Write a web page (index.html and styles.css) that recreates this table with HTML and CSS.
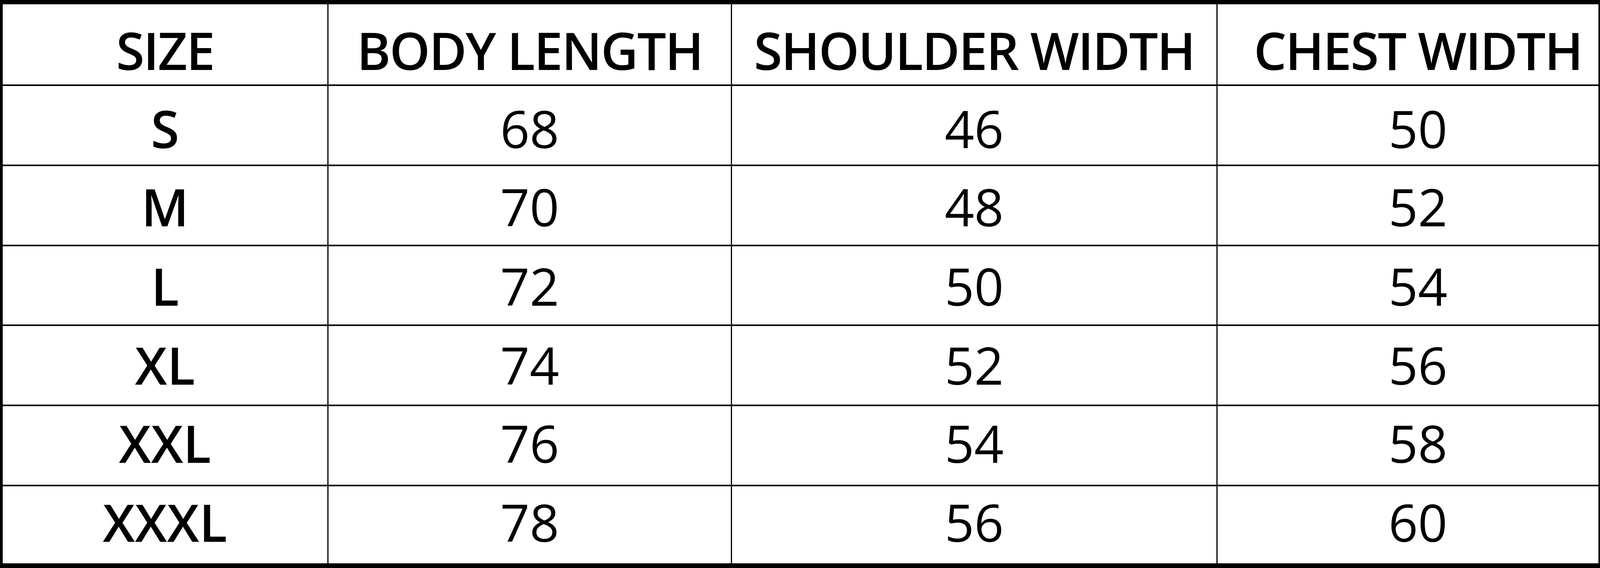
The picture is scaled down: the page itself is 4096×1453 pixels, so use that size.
FILE: index.html
```html
<!DOCTYPE html>
<html lang="en">
<head>
<meta charset="utf-8">
<title>Size Chart</title>
<link rel="stylesheet" href="styles.css">
</head>
<body>
<div class="chart">
  <div class="cell head r0">SIZE</div>
  <div class="cell head r0">BODY LENGTH</div>
  <div class="cell head r0">SHOULDER WIDTH</div>
  <div class="cell head r0 last">CHEST WIDTH</div>

  <div class="cell size r1">S</div>
  <div class="cell num r1">68</div>
  <div class="cell num r1">46</div>
  <div class="cell num r1 last">50</div>

  <div class="cell size r2">M</div>
  <div class="cell num r2">70</div>
  <div class="cell num r2">48</div>
  <div class="cell num r2 last">52</div>

  <div class="cell size r3">L</div>
  <div class="cell num r3">72</div>
  <div class="cell num r3">50</div>
  <div class="cell num r3 last">54</div>

  <div class="cell size r4">XL</div>
  <div class="cell num r4">74</div>
  <div class="cell num r4">52</div>
  <div class="cell num r4 last">56</div>

  <div class="cell size r5">XXL</div>
  <div class="cell num r5">76</div>
  <div class="cell num r5">54</div>
  <div class="cell num r5 last">58</div>

  <div class="cell size r6">XXXL</div>
  <div class="cell num r6">78</div>
  <div class="cell num r6">56</div>
  <div class="cell num r6 last">60</div>
</div>
</body>
</html>
```

FILE: styles.css
```css
html, body {
  margin: 0;
  padding: 0;
  background: #ffffff;
}

.chart {
  width: 4096px;
  height: 1453px;
  box-sizing: border-box;
  display: grid;
  grid-template-columns: 831px 1030px 1240px 975px;
  grid-template-rows: 205px 201px 201px 200px 201px 201px 197px;
  column-gap: 3px;
  row-gap: 4px;
  background: #000000;
  border-style: solid;
  border-color: #000000;
  border-width: 11px 4px 12px 7px;
  font-family: "Open Sans", "Noto Sans", sans-serif;
  color: #000000;
}

.cell {
  background: #ffffff;
  display: flex;
  justify-content: center;
  align-items: flex-start;
  font-size: 132px;
  line-height: 1;
  white-space: nowrap;
}

.head {
  font-weight: 600;
  letter-spacing: -3px;
}

.size {
  font-weight: 600;
}

.num {
  font-weight: 400;
}

.last {
  padding-left: 51px;
}

.r0 { padding-top: 51px; }
.r1 { padding-top: 42px; }
.r2 { padding-top: 37px; }
.r3 { padding-top: 35px; }
.r4 { padding-top: 33px; }
.r5 { padding-top: 28px; }
.r6 { padding-top: 25px; }
```
